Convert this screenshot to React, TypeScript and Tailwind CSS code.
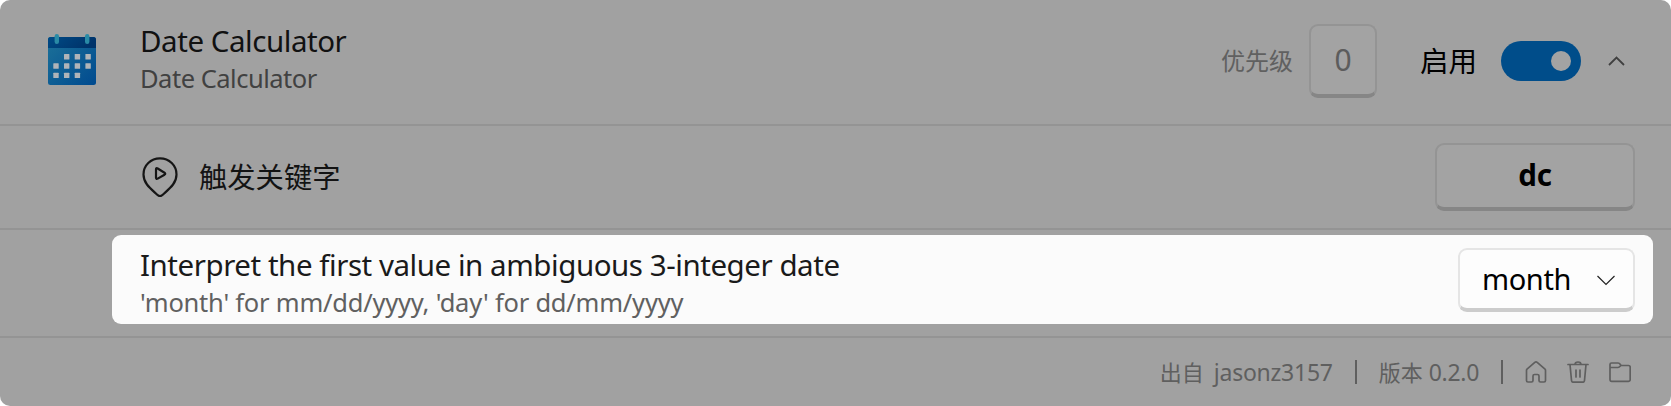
const T = "whitespace-nowrap leading-none font-['Noto_Sans','Noto_Sans_CJK_SC',sans-serif]";

function CalendarIcon() {
  const dots = [[16, 20], [26.7, 20], [37.4, 20], [5.3, 29.3], [16, 29.3], [26.7, 29.3], [37.4, 29.3], [5.3, 38.7], [16, 38.7], [26.7, 38.7]];
  return (
    <svg className="ml-[48px] mt-[34px] h-[52px] w-[48px] shrink-0" viewBox="0 0 48 52">
      <defs>
        <linearGradient id="body" x1="0" y1="0" x2="1" y2="1">
          <stop offset="0" stopColor="#1d7299" />
          <stop offset="1" stopColor="#004a8f" />
        </linearGradient>
        <linearGradient id="head" x1="0" y1="0" x2="1" y2="0.3">
          <stop offset="0" stopColor="#004b86" />
          <stop offset="1" stopColor="#00336a" />
        </linearGradient>
      </defs>
      <rect x="0" y="3" width="48" height="48" rx="2.5" fill="url(#body)" />
      <path d="M0 14V5.500a2.500 2.500 0 0 1 2.500-2.500h43a2.500 2.500 0 0 1 2.500 2.500V14z" fill="url(#head)" />
      <rect x="6.600" y="0" width="4.400" height="10" rx="2.200" fill="#2a8ba6" />
      <rect x="37" y="0" width="4.400" height="10" rx="2.200" fill="#2a8ba6" />
      {dots.map(([x, y]) => (
        <rect key={`${x}-${y}`} x={x} y={y} width="5.400" height="5.400" rx="0.500" fill="#b0b4b8" />
      ))}
    </svg>
  );
}

export default function App() {
  return (
    <div className={`flex h-[406px] w-[1671px] flex-col overflow-hidden rounded-[10px] bg-[#a1a1a1] ${T}`}>
      <div className="flex h-[126px] border-b-2 border-[#949494]">
        <CalendarIcon />
        <div className="ml-[44px] flex flex-col pt-[25px]">
          <div className="text-[29.500px] leading-[32px] tracking-[-0.450px] text-[#111]">Date Calculator</div>
          <div className="mt-[6px] text-[25.500px] leading-[30px] tracking-[-0.500px] text-[#414141]">Date Calculator</div>
        </div>
        <div className="ml-auto flex h-[122px] items-center">
          <div className="mr-[16px] text-[24px] text-[#606060]">优先级</div>
          <div className="flex h-[74px] w-[68px] items-center justify-center rounded-[9px] border-2 border-b-4 border-[#949494] border-b-[#868686] bg-[#a3a3a3] text-[30px] text-[#5c5c5c]">0</div>
          <div className="ml-[43px] text-[28.500px] text-black">启用</div>
          <div className="ml-[24px] flex h-[40px] w-[80px] items-center justify-end rounded-full bg-[#004d8a] pr-[10px]">
            <div className="size-[20px] rounded-full bg-[#a3a3a3]" />
          </div>
          <svg className="ml-[27px] mr-[46px] h-[10px] w-[17px]" viewBox="0 0 17 10" fill="none" stroke="#404040" strokeWidth="1.800">
            <path d="M1 9L8.500 1.500L16 9" />
          </svg>
        </div>
      </div>
      <div className="flex h-[104px] items-center border-b-2 border-[#949494]">
        <svg className="ml-[142px] h-[40px] w-[36px]" viewBox="0 0 36 40" fill="none" stroke="#151515" strokeWidth="2.200" strokeLinejoin="round">
          <path d="M18 1.300C8.700 1.300 1.500 8.500 1.500 17.400C1.500 26.500 8.500 31.500 15.800 38.200Q18 40 20.200 38.200C27.500 31.500 34.500 26.500 34.500 17.400C34.500 8.500 27.300 1.300 18 1.300Z" />
          <path d="M14 12.500V20.600Q14 22.500 15.700 21.600L22.500 17.700Q24 16.700 22.500 15.700L15.700 11.500Q14 10.600 14 12.500Z" />
        </svg>
        <div className="ml-[21px] text-[28.300px] text-[#131313]">触发关键字</div>
        <div className="ml-auto mr-[36px] flex h-[68px] w-[200px] items-center justify-center rounded-[9px] border-2 border-b-4 border-[#949494] border-b-[#868686] bg-[#a3a3a3] pb-[2px] text-[29.500px] font-bold tracking-[-0.300px] text-black">dc</div>
      </div>
      <div className="h-[108px] border-b-2 border-[#949494] pl-[112px] pt-[5px]">
        <div className="flex h-[89px] w-[1541px] items-center rounded-[9px] bg-[#fbfbfb] pl-[28px] pr-[18px]">
          <div className="flex flex-col pt-[9px]">
            <div className="text-[29.500px] leading-[36px] tracking-[-0.450px] text-[#1a1a1a]">Interpret the first value in ambiguous 3-integer date</div>
            <div className="text-[25.500px] leading-[38px] tracking-[-0.220px] text-[#606060]">'month' for mm/dd/yyyy, 'day' for dd/mm/yyyy</div>
          </div>
          <div className="ml-auto flex h-[64px] w-[177px] items-center rounded-[9px] border-2 border-b-4 border-[#e5e5e5] border-b-[#cccccc] bg-[#fdfdfd] pl-[22px] text-[29px] tracking-[-0.400px] text-black">
            <span>month</span>
            <svg className="ml-auto mr-[18px] mt-[3px] h-[11px] w-[18px]" viewBox="0 0 18 11" fill="none" stroke="#222" strokeWidth="1.200">
              <path d="M0.500 1L9 9.500L17.500 1" />
            </svg>
          </div>
        </div>
      </div>
      <div className="flex h-[68px] items-center justify-end pr-[40px] text-[23px] text-[#5f5f5f]">
        <span className="mr-[10px] text-[22px]">出自</span>
        <span className="tracking-[-0.260px]">jasonz3157</span>
        <span className="ml-[22px] mr-[22px] h-[24px] w-[2px] bg-[#5f5f5f]" />
        <span className="mr-[6px] text-[22px]">版本</span>
        <span className="tracking-[-0.300px]">0.2.0</span>
        <span className="ml-[22px] h-[24px] w-[2px] bg-[#5f5f5f]" />
        <svg className="ml-[22px] size-[22px]" viewBox="0 0 22 22" fill="none" stroke="#5f5f5f" strokeWidth="1.700" strokeLinejoin="round">
          <path d="M1.500 9.500Q1.500 8.700 2 8.200L9.800 1.400Q11 0.500 12.200 1.400L20 8.200Q20.500 8.700 20.500 9.500V19.500Q20.500 21 19 21H15.500Q14 21 14 19.500V15Q14 13.500 12.500 13.500H9.500Q8 13.500 8 15V19.500Q8 21 6.500 21H3Q1.500 21 1.500 19.500Z" />
        </svg>
        <svg className="ml-[20px] size-[22px]" viewBox="0 0 22 22" fill="none" stroke="#5f5f5f" strokeWidth="1.700" strokeLinecap="round">
          <path d="M1 3.500H21M8 3.500Q8 1 11 1T14 3.500M3 3.500L4.500 19.500Q4.700 21.200 6.200 21.200H15.800Q17.300 21.200 17.500 19.500L19 3.500M9 9V16M13 9V16" />
        </svg>
        <svg className="ml-[20px] size-[22px]" viewBox="0 0 22 22" fill="none" stroke="#5f5f5f" strokeWidth="1.700" strokeLinejoin="round">
          <path d="M1 6.500V3.500Q1 2 2.500 2H9Q10.500 2 11.200 3.200L12 4.500H19.500Q21.200 4.500 21.200 6.200V18.700Q21.200 20.300 19.500 20.300H2.700Q1 20.300 1 18.600ZH9Q10 6.500 12 4.500" />
        </svg>
      </div>
    </div>
  );
}
